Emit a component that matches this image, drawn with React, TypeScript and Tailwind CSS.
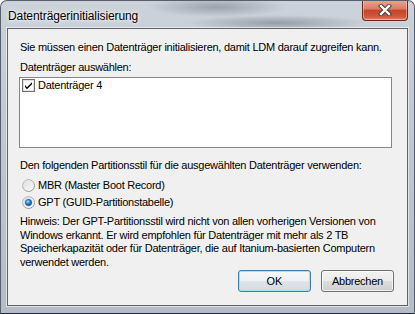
import React from "react";

function CheckBox() {
  return (
    <svg width="13" height="13" viewBox="0 0 13 13" className="shrink-0">
      <rect x="0.5" y="0.5" width="12" height="12" fill="#fff" stroke="#6f6f6f" />
      <rect x="1.5" y="1.5" width="10" height="10" fill="#fff" stroke="#e2e2e2" />
      <path d="M3 6 L5 8.2 L10 3.2 L10 5.2 L5 10.2 L3 8 Z" fill="#000" />
    </svg>
  );
}

function Radio({ checked }: { checked?: boolean }) {
  const id = checked ? "rc" : "ru";
  return (
    <svg width="13" height="13" viewBox="0 0 13 13" className="shrink-0">
      <defs>
        <linearGradient id={id + "b"} x1="0" y1="0" x2="1" y2="1">
          <stop offset="0" stopColor="#c4c4c4" />
          <stop offset="1" stopColor="#8a8a8a" />
        </linearGradient>
        <linearGradient id={id + "f"} x1="0" y1="0" x2="1" y2="1">
          <stop offset="0" stopColor="#dcdcdc" />
          <stop offset="1" stopColor="#fbfbfb" />
        </linearGradient>
        <radialGradient id={id + "d"} cx="0.4" cy="0.35" r="0.7">
          <stop offset="0" stopColor="#a6e0ff" />
          <stop offset="0.45" stopColor="#2a8fd8" />
          <stop offset="1" stopColor="#0b3f7a" />
        </radialGradient>
      </defs>
      <circle cx="6.5" cy="6.5" r="6" fill={`url(#${id}f)`} stroke={`url(#${id}b)`} />
      {checked && <circle cx="6.5" cy="6.5" r="3.2" fill={`url(#${id}d)`} stroke="#1d4f84" strokeWidth="0.6" />}
    </svg>
  );
}

export default function App() {
  return (
    <div className="w-[415px] h-[314px] flex flex-col rounded-t-[7px] border border-[#56606c] border-b-[#1e2640] bg-[linear-gradient(180deg,#ccd2d9_0%,#c2c9d1_35%,#b5bcc5_100%)] px-[6px] pb-[7px] font-['Liberation_Sans',Arial,sans-serif] text-black overflow-hidden">
      {/* title bar */}
      <div className="h-[27px] flex items-start justify-between bg-[radial-gradient(ellipse_70px_10px_at_210px_6px,rgba(95,105,118,0.45),transparent),radial-gradient(ellipse_90px_8px_at_270px_22px,rgba(85,95,108,0.45),transparent)]">
        <div className="self-center pl-[1px] pt-[2px] text-[12px] leading-[14px] tracking-[-0.1px] [text-shadow:0_0_6px_#fff,0_0_3px_#fff]">
          Datenträgerinitialisierung
        </div>
        <div className="-mt-[1px] w-[46px] h-[21px] flex items-center justify-center rounded-b-[4px] border border-t-0 border-[#6a2a1c] bg-[linear-gradient(180deg,#eaa796_0%,#dd7a63_45%,#c8432a_52%,#cf5a3c_85%,#e08a6e_100%)] shadow-[inset_0_0_0_1px_rgba(255,220,210,0.45)]">
          <svg width="14" height="12" viewBox="0 0 14 12">
            <path d="M3 2 L11 10 M11 2 L3 10" stroke="#3a3a3a" strokeWidth="4.2" strokeLinecap="square" />
            <path d="M3 2 L11 10 M11 2 L3 10" stroke="#ffffff" strokeWidth="2.4" strokeLinecap="square" />
          </svg>
        </div>
      </div>

      {/* client area */}
      <div className="flex-1 flex flex-col border border-[#5d646c] bg-[#f0f0f0] pl-[11px] text-[11px] leading-[13px] tracking-[-0.25px] shadow-[0_0_0_1px_rgba(255,255,255,0.55)]">
        <div className="mt-[12px] pl-[1px] whitespace-nowrap">
          Sie müssen einen Datenträger initialisieren, damit LDM darauf zugreifen kann.
        </div>
        <div className="mt-[7px] pl-[1px] whitespace-nowrap">Datenträger auswählen:</div>
        <div className="mt-[3px] w-[373px] h-[71px] border border-[#828790] bg-white pt-[1px] pl-[2px]">
          <div className="flex items-center gap-[3px]">
            <CheckBox />
            <span>Datenträger 4</span>
          </div>
        </div>
        <div className="mt-[11px] pl-[1px] whitespace-nowrap">
          Den folgenden Partitionsstil für die ausgewählten Datenträger verwenden:
        </div>
        <div className="mt-[7px] ml-[3px] flex items-center gap-[3px]">
          <Radio />
          <span>MBR (Master Boot Record)</span>
        </div>
        <div className="mt-[4px] ml-[3px] flex items-center gap-[3px]">
          <Radio checked />
          <span>GPT (GUID-Partitionstabelle)</span>
        </div>
        <div className="mt-[6px] pl-[1px] leading-[13.6px] whitespace-nowrap">
          Hinweis: Der GPT-Partitionsstil wird nicht von allen vorherigen Versionen von
          <br />
          Windows erkannt. Er wird empfohlen für Datenträger mit mehr als 2 TB
          <br />
          Speicherkapazität oder für Datenträger, die auf Itanium-basierten Computern
          <br />
          verwendet werden.
        </div>
        <div className="mt-[1px] w-[375px] flex justify-end gap-[10px] tracking-normal">
          <button className="w-[73px] h-[22px] rounded-[3px] border border-[#3c7fb1] bg-[linear-gradient(180deg,#f4f8fb_0%,#edf1f4_48%,#dfe5ea_52%,#d3dae0_100%)] shadow-[inset_0_0_0_1px_#a9dcf6] text-[11px] leading-[13px]">
            OK
          </button>
          <button className="w-[73px] h-[22px] rounded-[3px] border border-[#707070] bg-[linear-gradient(180deg,#f2f2f2_0%,#ebebeb_48%,#dddddd_52%,#cfcfcf_100%)] shadow-[inset_0_0_0_1px_rgba(255,255,255,0.7)] text-[11px] leading-[13px] tracking-[-0.25px]">
            Abbrechen
          </button>
        </div>
      </div>
    </div>
  );
}
